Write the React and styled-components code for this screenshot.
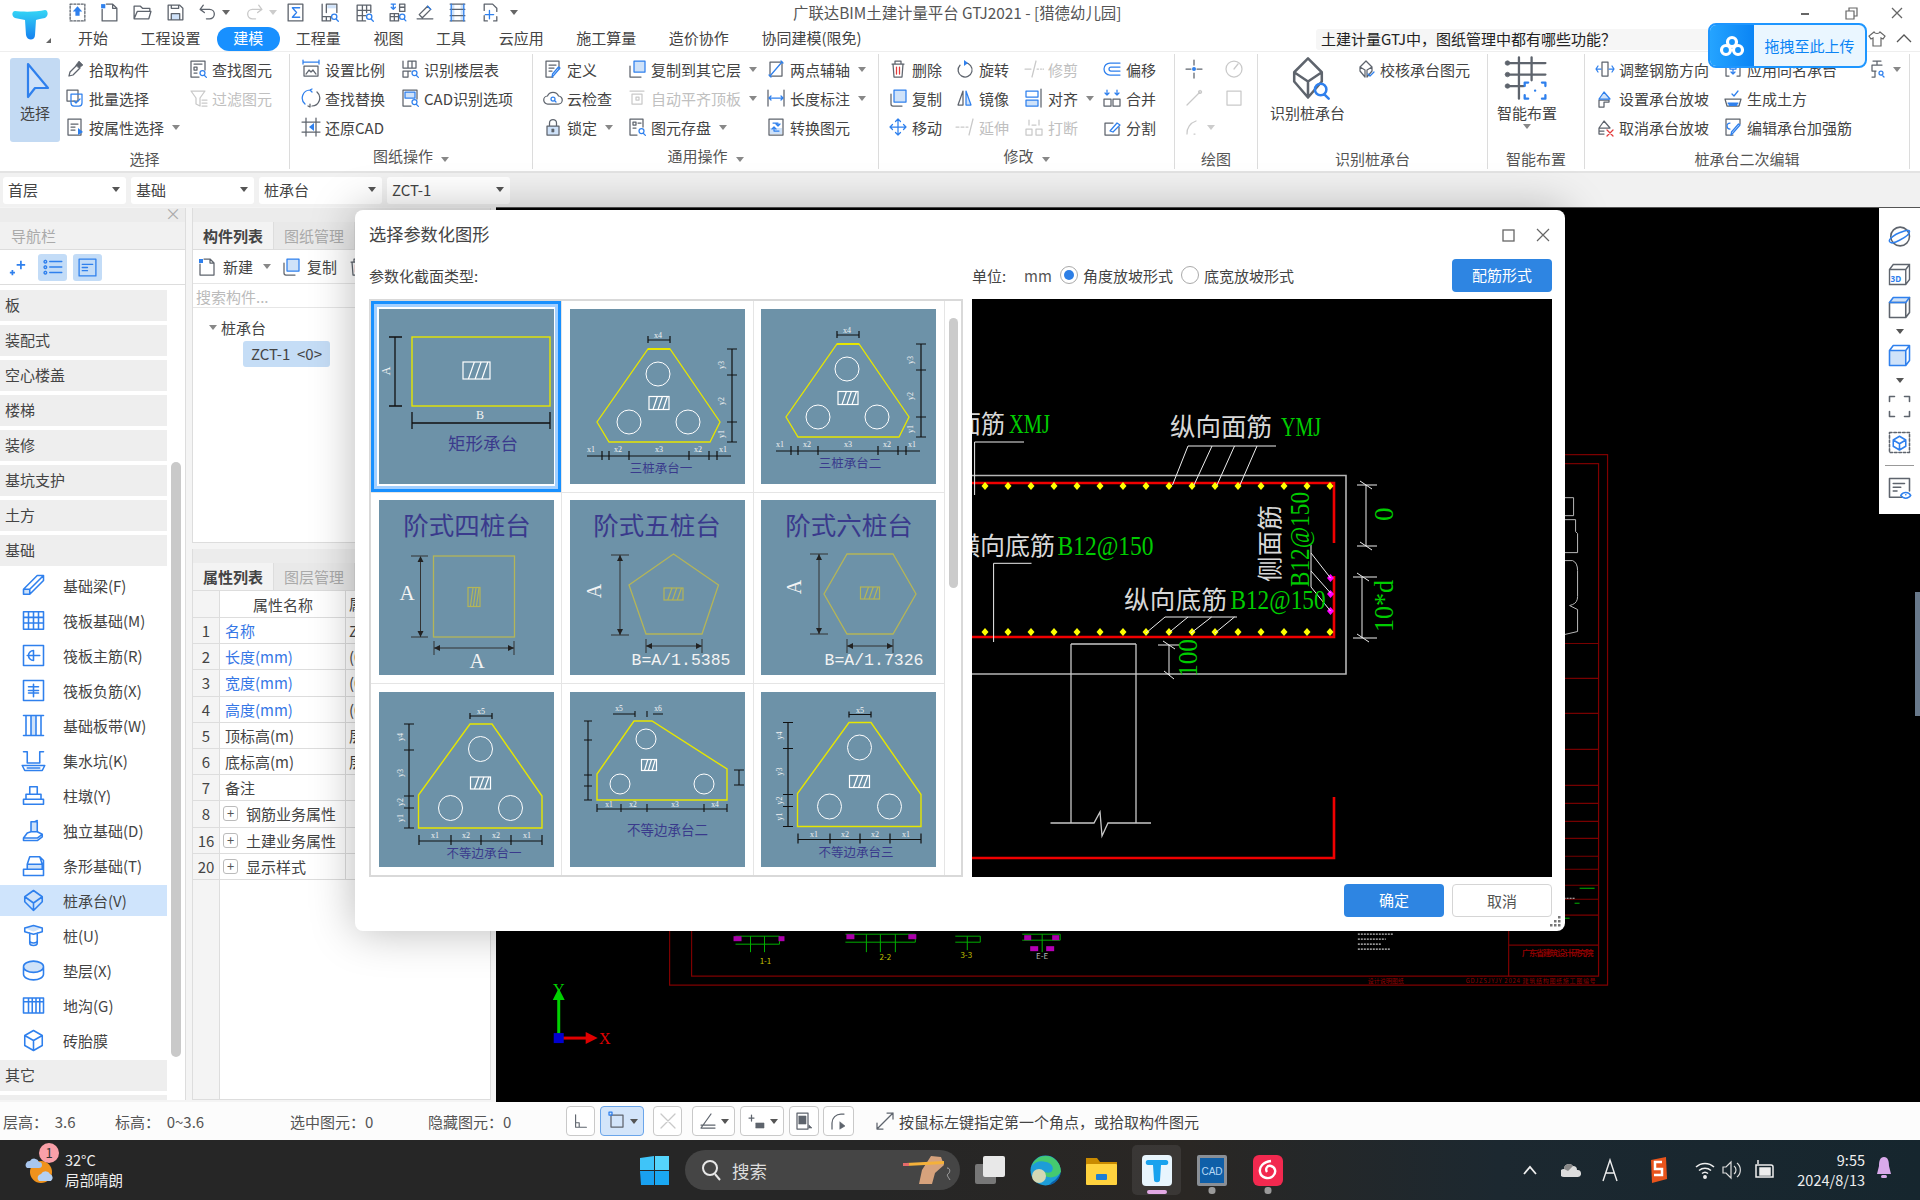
import React from "react";
import styled, { createGlobalStyle } from "styled-components";

const Global = createGlobalStyle`
  html, body {
    margin: 0;
    width: 1920px;
    height: 1200px;
    overflow: hidden;
    background: #fff;
    font-family: "Noto Sans CJK SC", "Noto Sans", sans-serif;
    font-size: 15px;
    color: #444;
  }
  * { box-sizing: border-box; }
`;

const LENS = "M12 14a2.5 2.5 0 1 0 5 0a2.5 2.5 0 1 0-5 0M16 16l2.4 2.4";

const ICONS = {
  upload: { dash: "M3 2h14v16H3z", f: "M10 4l4.5 5H12v4H8V9H5.5z" },
  newfile: { g: "M7 2h6l4 4v12H3V7M13 2v4h4", f: "M2 2h4v4H2z" },
  open: { g: "M2 16V4h6l2 2h7v3M2 16h14l2-7H5z" },
  save: { g: "M3 3h11l3 3v11H3zM6 17v-6h8v6M6 3v3h7V3", l: "M6 11h8v6H6z" },
  undo: { g: "M6 3L3 7l4 3M3 7h9a4.5 4.5 0 0 1 0 9H9" },
  redo: { off: true, g: "M14 3l3 4-4 3M17 7H8a4.5 4.5 0 0 0 0 9h3" },
  sum: { g: "M3 2h14v16H3z", b: "M14 5.5H7l4 4.5-4 4.5h7" },
  q1: { g: "M3 2v16h8M3 14h8v4M7 14v4M7 10V2h10v8", l: "M8 3h8v3H8z", b: LENS },
  q2: { g: "M3 3h13v7M3 8h13M3 13h8M3 3v15h8M8 3v15M12 3v7", b: LENS },
  q3: { g: "M3 11h8v7H3zM7 11v7M3 14h8M12 2h5v7h-5zM12 5h5", b: "M6 2v5M4 5l2 2 2-2M4 2h4M12 14a2.5 2.5 0 1 0 5 0a2.5 2.5 0 1 0-5 0M16 16l2 2" },
  q4: { g: "M2 16h15M6 14l-2-2 8-8 3 3-8 8z", b: "M12 4l3 3" },
  q5: { g: "M3 2h14M3 18h14M3 7h14M3 13h14", b: "M4 2v16M16 2v16", l: "M4 2h3v16H4zM13 2h3v16h-3z" },
  q6: { g: "M4 8V2h8l4 4v3M4 13v5h3M16 14v4h-3", b: "M9 8v8M5 12h8" },
  pick: { g: "M4 17l1-4 7-7 3 3-7 7z", k: "M11 6l3-4 4 4-4 3z" },
  batch: { g: "M2 2h11v11H2z", b: "M6 6h11v9a3 3 0 0 1-3 3H9a3 3 0 0 1-3-3zM9 13l2 2 4-4" },
  propsel: { g: "M3 2h13v16H3zM6 7h7M6 10h4M6 13h4", f: "M13 11l5 4-5 3z" },
  find: { g: "M3 2h14v9M3 2v16h8M6 5h8M6 8h3v3H6zM6 14h3", b: LENS },
  filter: { off: true, g: "M3 3h14l-5 7v8l-4-2v-6zM14 12h5M14 15h5M14 18h5" },
  scale: { g: "M3 7h14v10H3zM5 15l3-4 2 2 2-2 3 4", b: "M2 3h16M2 1v4M18 1v4" },
  floors: { g: "M3 2v7h5V2M8 2h8v7H8M12 2v7M3 12h5v6H3zM8 12h3", b: LENS },
  replace: { g: "M11 18a8 8 0 0 0 5-14M7 18l2 1v-3", b: "M9 2a8 8 0 0 0-5 14M11 1L9 2l2 2" },
  cadopt: { g: "M3 2h14v9M3 2v16h8", l: "M5 4h10v6H5z", b: "M5 4h10v6H5z" + LENS },
  restore: { g: "M5 1v18M15 1v18M1 5h18M1 15h18", f: "M13 6l-5 4 5 4z" },
  define: { g: "M3 2h13v8M3 2v16h7M6 6h7M6 9h5M6 12h3", b: "M17 9l-6 7-2 2 .5-3 6-7z" },
  cloud: { g: "M5 16a4 4 0 0 1-.5-8 6 6 0 0 1 11 0 4 4 0 0 1-.5 8z", b: "M8 11a2 2 0 1 0 4 0a2 2 0 1 0-4 0M12 13l1 1" },
  lock: { g: "M4 9h12v9H4zM6.5 9V6a3.5 3.5 0 0 1 7 0v3", l: "M4 9h12v9H4z", k: "M9 12h2v3H9z" },
  copylayer: { g: "M3 7v11h11", b: "M7 2h11v11H7z", l: "M7 2h11v11H7z" },
  autoalign: { off: true, g: "M3 3h14M5 6h10v10H5zM9 9h3v3H9z" },
  store: { g: "M3 2h13v8M3 2v16h7M6 5h3v3H6zM6 11h3M11 6h3", b: LENS },
  twoaxis: { g: "M4 3h12M4 17h12M4 3v14M16 3v14", b: "M16 3L4 17M3 16l2 2M15 2l2 2" },
  dimlen: { g: "M2 2v16M18 2v16", b: "M3 10h14M5 8l-2 2 2 2M15 8l2 2-2 2" },
  convert: { g: "M3 2h14v16H3z", l: "M4 11h12v6H4z", b: "M7 6h5v3M10 7l2 2 2-2M13 14H8v-3M6 12l2-2 2 2" },
  del: { g: "M4 5h12M7 5V2h6v3M5 5l1 13h8l1-13", r: "M8.5 8v7M11.5 8v7" },
  rotate: { g: "M10 4a7 7 0 1 1-5 2.2", f: "M9 1l4 3-4 3z" },
  trim: { off: true, g: "M12 2L8 18M1 10h6M13 10h1.5M16.5 10h1M19 10h1" },
  offset: { b: "M18 4H8a6 6 0 0 0 0 12h10M18 8H9a2 2 0 0 0 0 4h9" },
  copy: { g: "M3 6v10a2 2 0 0 0 2 2h9", b: "M6 2h12v12H6z", l: "M6 2h12v12H6z" },
  mirror: { g: "M8 3L3 17h5z", b: "M11 3l5 14h-5z", l: "M11 3l5 14h-5z" },
  align: { g: "M17 1v18", b: "M2 3h12v6H2zM2 12h12v6H2z", l: "M2 12h12v6H2z" },
  merge: { g: "M2 11h7v7H2zM11 11h7v7h-7z", b: "M5 2v5M15 2v5M3 5l2 2 2-2M13 5l2 2 2-2" },
  move: { b: "M10 2v16M2 10h16M7.5 4.5L10 2l2.5 2.5M7.5 15.5L10 18l2.5-2.5M4.5 7.5L2 10l2.5 2.5M15.5 7.5L18 10l-2.5 2.5" },
  extend: { off: true, g: "M1 10h3M6 10h3M11 10h2M18 2l-4 16" },
  brk: { off: true, g: "M2 12h6v6H2zM12 12h6v6h-6zM5 3v5M15 3v5M8 8h4" },
  split: { g: "M3 6h8M3 6v12h14v-8", b: "M8 14l7-8 3 2-7 7z" },
  point: { g: "M10 1v5M10 14v5M2 10h5M13 10h5", f: "M8 10a2 2 0 1 0 4 0a2 2 0 1 0-4 0" },
  gauge: { off: true, g: "M2 10a8 8 0 1 0 16 0a8 8 0 1 0-16 0M10 10l4-5" },
  line: { off: true, g: "M3 17L16 4M16 2.5a1.5 1.5 0 1 0 .1 0" },
  square: { off: true, g: "M3 3h14v14H3z" },
  arc: { off: true, g: "M3 17a13 13 0 0 1 9-13M10 17h1" },
  bigfind: { g: "M20 3L32 15v8L20 37 8 23v-8zM8 15l12 8 12-8M20 23v14", b: "M26 30a5 5 0 1 0 10 0a5 5 0 1 0-10 0M34 34l4 4", vb: 40, sw: 2.2 },
  smart: { g: "M13 2v36M24 2v20M3 7h33M3 17h33M3 27h14", k: "M1 7a2 2 0 1 0 4 0a2 2 0 1 0-4 0M1 17a2 2 0 1 0 4 0a2 2 0 1 0-4 0M1 27a2 2 0 1 0 4 0a2 2 0 1 0-4 0", b: "M21 24h-3v3M33 24h3v3M21 38h-3v-3M33 38h3v-3M27 31h.1", vb: 40, sw: 2 },
  check: { g: "M10 2l6 6v4l-5 6V11M10 2L4 8v4l5 6V11L4 8M16 8l-5 3", b: "M12 15l2 2 4-4" },
  adjust: { g: "M7 3h6v14H7z", b: "M1 10h5M14 10h5M3 7l-2 3 2 3M17 7l2 3-2 3" },
  slope: { g: "M4 12h10v2H9v5H4z", b: "M4 11l5-7 6 7z", l: "M4 11l5-7 6 7z" },
  noslope: { g: "M4 11l5-7 6 7zM4 11v6h5M4 14h5", r: "M12 13l6 6M18 13l-6 6" },
  apply: { g: "M3 3v14h3M17 3v14h-3", b: "M7 6h6v4H7zM10 10v5M8 13l2 2 2-2" },
  earth: { g: "M2 11h16l-2 7H4z", b: "M5 15h10M9 6l2 2 4-5", f: "M5 15h10l-1 3H6z" },
  editbar: { g: "M3 2h14v5M3 2v16h7", b: "M17 8l-7 8-2 2 .5-3 7-8zM7 6a3 3 0 0 0 0 6" },
  smartq: { g: "M5 2h8M9 2v4M4 6h10M4 12h4M4 6v6M7 12v6H4", b: "M11 14a2 2 0 1 0 4 0a2 2 0 1 0-4 0M14 16l2 2" },
  sparkle: { f: "M13 2h2v4h4v2h-4v4h-2V8H9V6h4zM3 13h2v2h2v2H5v2H3v-2H1v-2h2z" },
  listA: { b: "M3 4a1.2 1.2 0 1 0 .1 0M3 9a1.2 1.2 0 1 0 .1 0M3 14a1.2 1.2 0 1 0 .1 0M7 5h11M7 10h11M7 15h11" },
  listB: { b: "M2 2h16v16H2zM5 7h10M5 10h5M5 13h5" },
  beam: { b: "M2 17V13L13 2h5v4L7 17zM2 13h5v4M7 13L18 2", l: "M2 13h5v4H2z" },
  raft: { b: "M2 3h16v14H2zM2 7.5h16M2 12h16M6 3v14M10 3v14M14 3v14" },
  mainbar: { b: "M2 2h16v16H2zM5 10h10M10 6v8M10 6a4 4 0 0 0 0 8" },
  negbar: { b: "M2 2h16v16H2zM6 7h8M6 12h8M10 5v10M6 10h8" },
  strip: { b: "M2 2h16M2 18h16M4 2v16M8 2v16M12 2v16M16 2v16", l: "M8 2h4v16H8z" },
  pit: { b: "M2 3h3v9h10V3h3M1 14h18l-2 4H3zM5 16h10" },
  pier: { b: "M7 3h6v6H7zM4 9h12v4H4zM2 13h16v4H2z" },
  isolated: { b: "M8 3h5v8H8zM11 3l2-1M5 12l3-1h5l4 2-4 3H2zM2 16v2h11l4-3v-2", l: "M8 3h5v8H8z" },
  stripf: { b: "M7 3h8l2 6H5zM5 9h12v4H5zM2 13h16v5H2zM15 3l3 3v10", l: "M5 9h12v4H5z" },
  cap: { b: "M10 2l7 5v4l-7 7-7-7V7zM3 7l7 5 7-5M10 12v6", l: "M3 7l7-5 7 5-7 5z" },
  pile: { b: "M3 4l7-2 7 2v3l-7 2-7-2zM7 8v8a3 2 0 0 0 6 0V8M7 14a3 2 0 0 0 6 0", l: "M3 4l7-2 7 2-7 3z" },
  cushion: { b: "M2 7a8 4.5 0 1 0 16 0a8 4.5 0 1 0-16 0M2 7v6a8 4.5 0 0 0 16 0V7", l: "M2 7a8 4.5 0 1 0 16 0a8 4.5 0 1 0-16 0" },
  trench: { b: "M2 4h16v12H2zM2 7h16M6 4v12M9 4v12M12 4v12M15 4v12" },
  brick: { b: "M10 2l7 4v8l-7 4-7-4V6zM3 6l7 4 7-4M10 10v8" },
  sphere: { g: "M3 10a7.5 7.5 0 1 0 15 0a7.5 7.5 0 1 0-15 0", b: "M2 14c-1-2 5-6 8-7s8-3 8-1-4 5-8 7-7 3-8 1z" },
  cubetop: { g: "M2 6h13v12H2zM15 18l3-4V2", b: "M2 6l3-4h13l-3 4z", l: "M2 6l3-4h13l-3 4z" },
  cubefill: { b: "M2 6l3-4h13v12l-3 4H2zM2 6h13v12M15 6l3-4", l: "M2 6h13v12H2z" },
  corners: { g: "M2 6V2h4M14 2h4v4M18 14v4h-4M6 18H2v-4" },
  dashcube: { dash: "M2 2h16v16H2z", b: "M10 5l5 3v5l-5 3-5-3V8zM5 8l5 3 5-3M10 11v5" },
  listeye: { g: "M12 17H2V2h16v10M5 6h9M5 9h6M5 12h3", b: "M11 15.5c2-3 6-3 8 0-2 3-6 3-8 0zM15 15h.1" },
  s1: { g: "M4 3v14h12M4 12h4v5" },
  s2: { g: "M4 4h12v12H4z", b: "M2 1h3v3H2z" },
  s3: { off: true, g: "M3 3l14 14M17 3L3 17M4 4h.1" },
  s4: { g: "M3 17L13 3M3 17h14M3 14h14" },
  s5: { g: "M2 7h5M4.5 4v6", k: "M9 12h8v5H9z" },
  s6: { g: "M3 2h11v16H3z", k: "M5 5h7v8H5zM15 14l3 3h-3z" },
  s7: { g: "M3 18v-6a9 9 0 0 1 9-9M12 3h3", k: "M11 11l5 4-5 3z" },
  expand: { g: "M2 18L18 2M12 2h6v6M2 12v6h6" },
};

const Icon = ({ name, size = 20, off }) => {
  const d = ICONS[name];
  const vb = d.vb || 20;
  const sw = d.sw || (size > 30 ? 1.1 : 1.25);
  const dim = off || d.off;
  const g = dim ? "#c9c9c9" : "#5e646d";
  const b = dim ? "#cccccc" : "#2f80ed";
  return (
    <svg viewBox={`0 0 ${vb} ${vb}`} width={size} height={size} fill="none" strokeWidth={sw} strokeLinejoin="round" strokeLinecap="round">
      {d.l && <path d={d.l} fill={dim ? "#eee" : "#cfe2f9"} />}
      {d.dash && <path d={d.dash} stroke="#5e646d" strokeDasharray="2 1.5" />}
      {d.g && <path d={d.g} stroke={g} />}
      {d.b && <path d={d.b} stroke={b} />}
      {d.r && <path d={d.r} stroke="#e23b3b" />}
      {d.f && <path d={d.f} fill={b} />}
      {d.k && <path d={d.k} fill={g} stroke={g} strokeWidth="0.6" />}
    </svg>
  );
};

/* page frame */
const Page = styled.div`
  position: relative;
  width: 1920px;
  height: 1200px;
  overflow: hidden;
  display: flex;
  flex-direction: column;
  background: #fff;
`;

const Header = styled.div`
  display: flex;
  height: 51px;
`;
const LogoBox = styled.div`
  position: relative;
  width: 60px;
  padding: 5px 0 0 11px;
`;
const LogoTri = styled.span`
  position: absolute;
  left: 46px;
  top: 38px;
  border-right: 5px solid #666;
  border-top: 5px solid transparent;
`;
const HeadRight = styled.div`
  flex: 1;
  display: flex;
  flex-direction: column;
`;
const TitleRow = styled.div`
  display: grid;
  grid-template-columns: 733px auto 1fr;
  height: 27px;
  padding-bottom: 2px;
  align-items: center;
`;
const QuickBar = styled.div`
  display: flex;
  align-items: center;
  padding-left: 7px;
`;
const QuickBtn = styled.div`
  width: ${(p) => p.$w}px;
  display: flex;
  align-items: center;
`;
const Title = styled.div`
  font-size: 15.4px;
  margin-top: -2px;
  color: #555;
  white-space: pre;
`;
const WinCtrls = styled.div`
  display: flex;
  justify-content: flex-end;
  align-items: center;
  padding-right: 16px;
  gap: 32px;
`;
const TabRow = styled.div`
  display: flex;
  align-items: center;
  height: 24px;
  padding-left: 1.7px;
`;
const Tab = styled.div`
  padding: 0 16.3px;
  height: 24px;
  line-height: 21px;
  border-radius: 12px;
  white-space: nowrap;
  color: ${(p) => (p.$on ? "#fff" : "#444")};
  background: ${(p) => (p.$on ? "#1890ff" : "transparent")};
`;
const AskBox = styled.div`
  margin-left: auto;
  width: 394px;
  height: 21px;
  line-height: 19px;
  padding-left: 5px;
  border-radius: 3px;
  background: #f6f6f6;
  color: #222;
  white-space: nowrap;
  font-size: 15px;
  overflow: hidden;
`;
const HeadTools = styled.div`
  width: 210px;
  display: flex;
  justify-content: flex-end;
  align-items: center;
  gap: 10px;
  padding-right: 8px;
`;

/* ribbon */
const Ribbon = styled.div`
  display: flex;
  height: 122px;
  padding-top: 2px;
  border-top: 1px solid #eee;
  border-bottom: 2px solid #e3e3e3;
  background: #fff;
`;
const Group = styled.div`
  width: ${(p) => p.$w}px;
  height: 115px;
  border-right: 1px solid #dcdcdc;
  display: flex;
  flex-direction: column;
`;
const GroupBody = styled.div`
  height: 89px;
  padding: 1px 0 0 ${(p) => p.$pad}px;
  display: flex;
`;
const GroupLabel = styled.div`
  height: 26px;
  padding-top: ${(p) => (p.$drop ? 3 : 6)}px;
  line-height: 20px;
  text-align: center;
  color: #555;
  white-space: nowrap;
`;
const Col = styled.div`
  width: ${(p) => p.$w}px;
  margin-left: ${(p) => p.$ml || 0}px;
  display: flex;
  flex-direction: column;
  flex-shrink: 0;
`;
const ToolRow = styled.div`
  height: 29px;
  padding-bottom: 1px;
  display: flex;
  align-items: center;
  white-space: nowrap;
  color: ${(p) => (p.$off ? "#c0c0c0" : "#444")};
`;
const ToolIcon = styled.span`
  width: 24px;
  height: 20px;
  display: block;
  flex-shrink: 0;
`;
const Caret = styled.span`
  display: inline-block;
  margin-left: ${(p) => p.$ml ?? 8}px;
  border-left: 4px solid transparent;
  border-right: 4px solid transparent;
  border-top: 5px solid ${(p) => p.$c || "#888"};
`;
const SelectBtn = styled.div`
  width: 50px;
  height: 84px;
  margin-top: 3px;
  flex-shrink: 0;
  border-radius: 3px;
  background: #c3daf3;
  display: flex;
  flex-direction: column;
  align-items: center;
  padding-top: 3px;
`;
const BigBtn = styled.div`
  width: ${(p) => p.$w}px;
  flex-shrink: 0;
  display: flex;
  flex-direction: column;
  align-items: center;
  white-space: nowrap;
`;
const BigLabel = styled.div`
  margin-top: ${(p) => p.$mt}px;
  line-height: 22px;
`;

const Tool = ({ icon, label, off, caret }) => (
  <ToolRow $off={off}>
    <ToolIcon><Icon name={icon} off={off} /></ToolIcon>
    {label}
    {caret && <Caret />}
  </ToolRow>
);

/* selectors */
const SelectorBar = styled.div`
  height: 34px;
  display: flex;
  gap: 5px;
  padding: 4px 0 0 3px;
  background: #f1f1f1;
`;
const Selector = styled.div`
  width: 123px;
  height: 27px;
  padding: 0 6px 2px 5px;
  background: #fff;
  border-radius: 3px;
  display: flex;
  justify-content: space-between;
  align-items: center;
`;

/* work area */
const Main = styled.div`
  height: 895px;
  display: flex;
  background: #f4f4f4;
`;
const Nav = styled.div`
  position: relative;
  width: 186px;
  margin: 1px 0 2px;
  border-right: 1px solid #ddd;
  background: #fff;
  overflow: hidden;
  flex-shrink: 0;
`;
const Band = styled.div`
  position: relative;
  height: 14px;
  background: #ececec;
`;
const BandClose = styled.span`
  position: absolute;
  right: 4px;
  top: -5px;
  font-size: 16px;
  line-height: 20px;
  color: #aaa;
`;
const NavTitle = styled.div`
  height: 28px;
  line-height: 27px;
  padding-left: 11px;
  color: #aaa;
  background: #f1f1f1;
  border-bottom: 1px solid #ddd;
`;
const NavTools = styled.div`
  height: 35px;
  display: flex;
  align-items: center;
  padding-left: 9px;
  border-bottom: 1px solid #ddd;
`;
const NavToggle = styled.div`
  width: 29px;
  height: 27px;
  border-radius: 3px;
  background: #c3dcf7;
  display: flex;
  align-items: center;
  justify-content: center;
  margin-left: ${(p) => p.$ml}px;
`;
const NavList = styled.div`
  display: flex;
  flex-direction: column;
  gap: 4px;
  padding-top: 5px;
  width: 167px;
`;
const NavGroup = styled.div`
  height: 31px;
  line-height: 30px;
  padding-left: 5px;
  background: #eeeeee;
  flex-shrink: 0;
`;
const NavItem = styled.div`
  height: 31px;
  display: flex;
  align-items: center;
  padding: 0 0 1px 21px;
  gap: 17px;
  flex-shrink: 0;
  white-space: nowrap;
  background: ${(p) => (p.$on ? "#cfe4fc" : "transparent")};
`;
const NavScroll = styled.div`
  position: absolute;
  left: 171px;
  top: 254px;
  width: 10px;
  height: 595px;
  border-radius: 5px;
  background: #c9c9c9;
`;

const ListCol = styled.div`
  width: 299px;
  margin: 1px 5px 2px 6px;
  display: flex;
  flex-direction: column;
  gap: 6px;
  flex-shrink: 0;
`;
const Panel = styled.div`
  height: ${(p) => p.$h}px;
  flex: ${(p) => (p.$h ? "none" : 1)};
  background: #fff;
  border: 1px solid #ddd;
  border-top: 0;
  display: flex;
  flex-direction: column;
  overflow: hidden;
`;
const TabStrip = styled.div`
  display: flex;
  height: 28px;
  background: #e9e9e9;
  border-bottom: 1px solid #ddd;
`;
const PTab = styled.div`
  width: 81px;
  line-height: 27px;
  text-align: center;
  font-weight: ${(p) => (p.$on ? 700 : 400)};
  color: ${(p) => (p.$on ? "#444" : "#aaa")};
  background: ${(p) => (p.$on ? "#f3f3f3" : "#e9e9e9")};
  border-right: 1px solid #ddd;
`;
const PanelBar = styled.div`
  height: 34px;
  display: flex;
  align-items: center;
  padding-left: 4px;
  border-bottom: 1px solid #e6e6e6;
`;
const BarItem = styled.div`
  display: flex;
  align-items: center;
  gap: 6px;
  margin-right: 10px;
`;
const SearchLine = styled.div`
  height: 24px;
  line-height: 23px;
  padding: 1px 0 0 3px;
  color: #bbb;
  border-bottom: 1px solid #e6e6e6;
`;
const TreeRow = styled.div`
  margin: 7px 0 0 16px;
  display: flex;
  align-items: center;
  height: 24px;
  gap: 4px;
`;
const TreePill = styled.div`
  margin: 2px 0 0 50px;
  width: 87px;
  height: 26px;
  line-height: 25px;
  border-radius: 3px;
  text-align: center;
  background: #c5ddf6;
  white-space: pre;
`;
const Table = styled.div`
  flex: 1;
  display: flex;
  flex-direction: column;
`;
const TRow = styled.div`
  display: grid;
  grid-template-columns: 27px 126px 1fr;
  height: ${(p) => p.$h || 26.2}px;
  flex: ${(p) => (p.$fill ? 1 : "none")};
`;
const TIndex = styled.div`
  background: #f4f4f4;
  border-right: 1px solid #ddd;
  border-bottom: ${(p) => (p.$fill ? 0 : "1px solid #ddd")};
  text-align: center;
  line-height: 25px;
`;
const TName = styled.div`
  display: flex;
  align-items: center;
  padding-left: ${(p) => (p.$head ? 33 : 5)}px;
  border-right: 1px solid #ddd;
  border-bottom: 1px solid #ddd;
  white-space: nowrap;
  color: ${(p) => (p.$blue ? "#3677e6" : "#444")};
`;
const TValue = styled.div`
  padding-left: 3px;
  line-height: 25px;
  border-bottom: 1px solid #ddd;
  white-space: nowrap;
  overflow: hidden;
`;
const PlusBox = styled.span`
  width: 15px;
  height: 15px;
  border: 1px solid #bbb;
  border-radius: 3px;
  font-size: 13px;
  line-height: 12px;
  text-align: center;
  margin-right: 8px;
  margin-left: -2px;
  color: #555;
`;

const CanvasBox = styled.div`
  position: relative;
  flex: 1;
  background: #000;
  border-top: 1px solid #555;
  overflow: hidden;
`;
const Art = styled.svg`
  display: block;
  width: 100%;
  height: 100%;
`;
const Palette = styled.div`
  position: absolute;
  right: 0;
  top: 0;
  width: 41px;
  height: 306px;
  background: #fff;
  display: flex;
  flex-direction: column;
  align-items: center;
  padding-top: 16px;
`;
const PaletteSlot = styled.div`
  height: 25px;
  margin-bottom: ${(p) => p.$mb || 0}px;
`;
const PaletteCaret = styled.div`
  height: ${(p) => p.$h || 24}px;
  margin-top: -1px;
  display: flex;
  align-items: center;
  justify-content: center;
`;
const PaletteRule = styled.div`
  width: 29px;
  height: 1px;
  background: #999;
  margin: 10px 0;
`;
const EdgeBar = styled.div`
  position: absolute;
  right: 0;
  top: 384px;
  width: 5px;
  height: 124px;
  background: #68788a;
`;

/* status + taskbar */
const StatusBar = styled.div`
  height: 38px;
  display: flex;
  align-items: center;
  padding-left: 3px;
  background: #fcfcfc;
`;
const StatText = styled.div`
  width: ${(p) => p.$w}px;
  white-space: pre;
  color: #555;
`;
const StatBtn = styled.div`
  width: ${(p) => p.$w}px;
  height: 30px;
  margin-left: ${(p) => p.$ml || 0}px;
  border: 1.5px solid ${(p) => (p.$on ? "#6aa5ea" : "#c9c9c9")};
  border-radius: 4px;
  background: ${(p) => (p.$on ? "#d3e5fa" : "#fff")};
  display: flex;
  align-items: center;
  justify-content: center;
  gap: 3px;
`;
const Hint = styled.div`
  margin-left: 21px;
  display: flex;
  align-items: center;
  gap: 4px;
  color: #444;
  white-space: nowrap;
`;

const Taskbar = styled.div`
  height: 60px;
  display: flex;
  align-items: center;
  color: #eee;
  background: linear-gradient(90deg, #262626 0%, #262626 45%, #2a2724 62%, #1c2830 78%, #16262e 100%);
`;
const Weather = styled.div`
  position: relative;
  width: 640px;
  padding-left: 25px;
  display: flex;
  align-items: center;
  gap: 9px;
`;
const WeatherBadge = styled.span`
  position: absolute;
  left: 39px;
  top: -7px;
  width: 20px;
  height: 20px;
  border-radius: 50%;
  background: #f9a0a8;
  color: #333;
  font-size: 13px;
  line-height: 20px;
  text-align: center;
`;
const WeatherText = styled.div`
  line-height: 20px;
  font-size: 14.5px;
`;
const SearchPill = styled.div`
  position: relative;
  width: 275px;
  height: 40px;
  margin-left: 16px;
  border-radius: 20px;
  background: #454545;
  display: flex;
  align-items: center;
  padding-left: 14px;
  gap: 9px;
  font-size: 17.5px;
  color: #ddd;
`;
const Doodle = styled.svg`
  position: absolute;
  right: 5px;
  top: 4px;
`;
const TaskBtn = styled.div`
  position: relative;
  width: 49px;
  height: 50px;
  margin-left: ${(p) => p.$ml ?? 6.5}px;
  border-radius: 5px;
  background: ${(p) => (p.$on ? "rgba(255,255,255,.08)" : "transparent")};
  display: flex;
  align-items: center;
  justify-content: center;
`;
const TaskMark = styled.span`
  position: absolute;
  bottom: 1px;
  left: 50%;
  transform: translateX(-50%);
  width: ${(p) => (p.$on ? 20 : 7)}px;
  height: ${(p) => (p.$on ? 4 : 7)}px;
  border-radius: 3px;
  background: ${(p) => (p.$on ? "#e2a9e4" : "#9a9a9a")};
`;
const Tray = styled.div`
  margin-left: auto;
  display: flex;
  align-items: center;
  padding-right: 28px;
`;
const TrayItem = styled.div`
  width: 20px;
  margin-left: ${(p) => p.$ml}px;
  display: flex;
  justify-content: center;
`;
const Clock = styled.div`
  margin-left: 22px;
  text-align: right;
  line-height: 20px;
  font-size: 14.5px;
  color: #eee;
`;
const Bell = styled.div`
  margin-left: 11px;
  width: 16px;
`;

/* floating upload */
const Upload = styled.div`
  position: absolute;
  left: 1708px;
  top: 23px;
  width: 159px;
  height: 45px;
  border-radius: 8px;
  border: 2px solid #1e96ff;
  background: #eaf6ff;
  display: flex;
  overflow: hidden;
  z-index: 3;
`;
const UploadIcon = styled.div`
  width: 44px;
  background: linear-gradient(90deg, #25a4ff, #0a84f5);
  display: flex;
  align-items: center;
  justify-content: center;
`;
const UploadText = styled.div`
  flex: 1;
  text-align: center;
  line-height: 41px;
  color: #0a84f5;
  white-space: nowrap;
`;

/* dialog */
const Dialog = styled.div`
  position: absolute;
  left: 355px;
  top: 210px;
  width: 1210px;
  height: 721px;
  background: #fff;
  border-radius: 8px;
  box-shadow: 0 0 45px rgba(0, 0, 0, 0.28);
  padding: 0 13px 0 14px;
  display: flex;
  flex-direction: column;
  z-index: 2;
`;
const DlgHead = styled.div`
  height: 49px;
  display: flex;
  align-items: center;
  justify-content: space-between;
  padding-bottom: 3px;
`;
const DlgTitle = styled.div`
  font-size: 17.2px;
  color: #444;
`;
const DlgCtrls = styled.div`
  display: flex;
  align-items: center;
  gap: 21px;
  margin: 4px 2px 0 0;
`;
const DlgOptions = styled.div`
  height: 40px;
  padding-bottom: 8px;
  display: flex;
  align-items: center;
`;
const OptLabel = styled.div`
  width: 603px;
  white-space: nowrap;
`;
const OptUnit = styled.div`
  width: 52px;
  white-space: nowrap;
`;
const OptMM = styled.div`
  width: 36px;
  color: #555;
`;
const Radio = styled.span`
  width: 18px;
  height: 18px;
  border-radius: 50%;
  border: 1.5px solid #aaa;
  background: #fff;
  margin-right: 5px;
  flex-shrink: 0;
  display: flex;
  align-items: center;
  justify-content: center;
`;
const RadioDot = styled.span`
  width: 10px;
  height: 10px;
  border-radius: 50%;
  background: #2d7fe6;
`;
const RadioLabel = styled.div`
  width: ${(p) => p.$w}px;
  white-space: nowrap;
`;
const BlueBtn = styled.div`
  margin-left: auto;
  width: 100px;
  height: 33px;
  line-height: 32px;
  border-radius: 4px;
  background: #2e85e2;
  color: #fff;
  text-align: center;
`;
const GhostBtn = styled.div`
  width: 100px;
  height: 33px;
  line-height: 31px;
  border-radius: 4px;
  border: 1px solid #d5d5d5;
  color: #555;
  text-align: center;
`;
const DlgBody = styled.div`
  display: flex;
  gap: 9px;
  height: 578px;
`;
const GridBox = styled.div`
  position: relative;
  width: 594px;
  height: 578px;
  border: 2px solid #d9d9d9;
  overflow: hidden;
`;
const ShapeGrid = styled.div`
  display: grid;
  grid-template-columns: repeat(3, 191.4px);
  grid-auto-rows: 191.5px;
`;
const Cell = styled.div`
  display: flex;
  align-items: center;
  justify-content: center;
  border-right: 1.5px solid #e5e5e5;
  border-bottom: 1.5px solid #e5e5e5;
  box-shadow: ${(p) => (p.$on ? "inset 0 0 0 3px #1890ff, inset 0 0 0 6px #a2cfff" : "none")};
`;
const ShapeBox = styled.div`
  width: 175px;
  height: 175px;
  background: #6d92a8;
`;
const ShapeSvg = styled.svg`
  display: block;
`;
const GridScroll = styled.div`
  position: absolute;
  left: 578px;
  top: 17px;
  width: 9px;
  height: 270px;
  border-radius: 5px;
  background: #cbcbcb;
`;
const Preview = styled.svg`
  display: block;
  width: 580px;
  height: 578px;
  background: #000;
`;
const DlgFoot = styled.div`
  display: flex;
  justify-content: flex-end;
  gap: 8px;
  padding-top: 7px;
`;
const FootBlue = styled(BlueBtn)`
  margin-left: 0;
`;
const Grip = styled.svg`
  position: absolute;
  right: 3px;
  bottom: 3px;
`;

/* svg label helpers */
const CadText = styled.text`
  font-family: "Noto Sans CJK SC", sans-serif;
  fill: #d8d8d8;
`;
const CadCode = styled.text`
  font-family: "Liberation Serif", serif;
  fill: #00cc00;
`;
const ShapeTitle = styled.text`
  font-family: "Noto Sans CJK SC", sans-serif;
  fill: #3a3a8c;
  text-anchor: middle;
`;
const DimText = styled.text`
  font-family: "Liberation Serif", serif;
  fill: #f3f3f3;
  text-anchor: middle;
`;
const DimMono = styled(DimText)`
  font-family: "Liberation Mono", monospace;
`;

const Hatch = ({ x, y, w, h, c = "#fff" }) => (
  <g stroke={c} fill="none" strokeWidth="1.2">
    <rect x={x - w / 2} y={y - h / 2} width={w} height={h} />
    {[0.2, 0.45, 0.7].map((t) => (
      <path key={t} d={`M${x - w / 2 + t * w} ${y + h / 2}l${w * 0.22} ${-h}`} />
    ))}
  </g>
);

const Y = "#e6e600";
const TriPile = () => (
  <g>
    <path d="M78 40h22l50 73-10 20H39l-12-20z" fill="none" stroke={Y} strokeWidth="1.3" />
    <path d="M78 40h22" stroke={Y} strokeWidth="2" />
    {[[88, 65], [59, 113], [118, 113]].map(([cx, cy]) => (
      <circle key={cx} cx={cx} cy={cy} r="12" fill="none" stroke="#fff" />
    ))}
    <Hatch x={89} y={94} w={20} h={13} />
    <path d="M162 40v93M157 40h10M157 66h10M157 113h10M157 133h10M78 31h22M78 27v7M100 27v7M17 147h144M32 142v9M39 142v9M59 142v9M119 142v9M139 142v9M147 142v9" stroke="#111" strokeWidth="1.2" fill="none" />
    {[[21, 143, "x1"], [48, 143, "x2"], [89, 143, "x3"], [128, 143, "x2"], [153, 143, "x1"], [88, 29, "x4"]].map(([x, y, t], i) => (
      <DimText key={i} x={x} y={y} fontSize="8">{t}</DimText>
    ))}
    {[[56, "y3"], [92, "y2"], [125, "y1"]].map(([y, t]) => (
      <DimText key={t} x={154} y={y} fontSize="8" transform={`rotate(-90 154 ${y})`}>{t}</DimText>
    ))}
  </g>
);

const UnequalOne = () => (
  <g>
    <path d="M91 32h22l50 72v32H39.5V103z" fill="none" stroke={Y} strokeWidth="1.4" />
    {[[101.5, 57], [71.5, 116], [131.5, 116]].map(([cx, cy]) => (
      <ellipse key={cx} cx={cx} cy={cy} rx="12" ry="12.5" fill="none" stroke="#fff" />
    ))}
    <Hatch x={101.5} y={91} w={20} h={12} />
    <path d="M30 32v104M25 32h10M25 58h10M25 104h10M25 116h10M25 136h10M91 24h22M91 21v6M113 21v6M40 149h123M40 143v10M72 143v10M102 143v10M132 143v10M163 143v10" stroke="#111" strokeWidth="1.2" fill="none" />
    {[[56, 146, "x1"], [87, 146, "x2"], [117, 146, "x2"], [148, 146, "x1"], [102, 22, "x5"]].map(([x, y, t], i) => (
      <DimText key={i} x={x} y={y} fontSize="8">{t}</DimText>
    ))}
    {[[45, "y4"], [81, "y3"], [110, "y2"], [126, "y1"]].map(([y, t]) => (
      <DimText key={t} x={24} y={y} fontSize="8" transform={`rotate(-90 24 ${y})`}>{t}</DimText>
    ))}
  </g>
);

const shapes = [
  (
    <g key="rect">
      <rect x="33" y="28" width="138" height="69" fill="none" stroke={Y} strokeWidth="1.4" />
      <path d="M16 28v69M10 28h13M10 97h13M33 114h138M33 103v17M171 103v17" stroke="#111" strokeWidth="1.3" fill="none" />
      <Hatch x={97.5} y={61.5} w={27} h={17} />
      <DimText x={11} y={62} fontSize="12" transform="rotate(-90 11 62)">A</DimText>
      <DimText x={101} y={110} fontSize="12">B</DimText>
      <ShapeTitle x={104} y={141} fontSize="17.5">矩形承台</ShapeTitle>
    </g>
  ),
  (
    <g key="t1">
      <TriPile />
      <ShapeTitle x={91} y={164} fontSize="12.5">三桩承台一</ShapeTitle>
    </g>
  ),
  (
    <g key="t2">
      <g transform="translate(-2,-5)"><TriPile /></g>
      <ShapeTitle x={89} y={159} fontSize="12.5">三桩承台二</ShapeTitle>
    </g>
  ),
  (
    <g key="s4">
      <ShapeTitle x={88} y={35} fontSize="25.5">阶式四桩台</ShapeTitle>
      <rect x="54.5" y="56" width="81" height="81" fill="none" stroke="#b4b558" strokeWidth="1.3" />
      <Hatch x={95} y={97} w={12} h={19} c="#b4b558" />
      <path d="M41.5 57v80M32 56h17M32 137h17M55 148h80M55 141v14M135 141v14" stroke="#333" fill="none" />
      <path d="M41.5 56l-3 6h6zM41.5 137l-3-6h6zM55 148l6-3v6zM135 148l-6-3v6z" fill="#222" />
      <DimText x={28} y={100} fontSize="21">A</DimText>
      <DimText x={98} y={168} fontSize="21">A</DimText>
    </g>
  ),
  (
    <g key="s5">
      <ShapeTitle x={87} y={35} fontSize="25.5">阶式五桩台</ShapeTitle>
      <path d="M103.5 54l45 31-16.5 49H76L59 85z" fill="none" stroke="#b4b558" strokeWidth="1.3" />
      <Hatch x={103.5} y={94} w={19} h={12} c="#b4b558" />
      <path d="M50 55v80M41 55h18M41 135h18M76 146h56M76 139v14M132 139v14" stroke="#333" fill="none" />
      <path d="M50 55l-3 6h6zM50 135l-3-6h6zM76 146l6-3v6zM132 146l-6-3v6z" fill="#222" />
      <DimText x={31} y={91} fontSize="20" transform="rotate(-90 31 91)">A</DimText>
      <DimMono x={111} y={165} fontSize="16.5">B=A/1.5385</DimMono>
    </g>
  ),
  (
    <g key="s6">
      <ShapeTitle x={88} y={35} fontSize="25.5">阶式六桩台</ShapeTitle>
      <path d="M86 54h46l23 40-23 40H86L63 94z" fill="none" stroke="#b4b558" strokeWidth="1.3" />
      <Hatch x={109} y={93} w={19} h={12} c="#b4b558" />
      <path d="M58 54v80M49 54h18M49 134h18M86 146h46M86 139v14M132 139v14" stroke="#333" fill="none" />
      <path d="M58 54l-3 6h6zM58 134l-3-6h6zM86 146l6-3v6zM132 146l-6-3v6z" fill="#222" />
      <DimText x={39.5} y={87} fontSize="20" transform="rotate(-90 39.5 87)">A</DimText>
      <DimMono x={113} y={165} fontSize="16.5">B=A/1.7326</DimMono>
    </g>
  ),
  (
    <g key="u1">
      <UnequalOne />
      <ShapeTitle x={105} y={166} fontSize="12.5">不等边承台一</ShapeTitle>
    </g>
  ),
  (
    <g key="u2">
      <path d="M64 29h18l75 48v31H27V82z" fill="none" stroke={Y} strokeWidth="1.4" />
      {[[76, 47], [50, 92], [134, 92]].map(([cx, cy]) => (
        <circle key={cx} cx={cx} cy={cy} r="10" fill="none" stroke="#fff" />
      ))}
      <Hatch x={79} y={73} w={15} h={11} />
      <path d="M18 29v79M14 29h8M14 48h8M14 83h8M14 94h8M14 108h8M43 22h22M65 19v6M77 19v6M83 22h10M27 117h130M27 112v8M51 112v8M77 112v8M134 112v8M157 112v8M169 78v15M164 78h10M164 93h10" stroke="#111" strokeWidth="1.1" fill="none" />
      {[[39, 115, "x1"], [63, 115, "x2"], [105, 115, "x3"], [145, 115, "x4"], [49, 19, "x5"], [88, 19, "x6"]].map(([x, y, t], i) => (
        <DimText key={i} x={x} y={y} fontSize="7.5">{t}</DimText>
      ))}
      <ShapeTitle x={97.5} y={143} fontSize="13.5">不等边承台二</ShapeTitle>
    </g>
  ),
  (
    <g key="u3">
      <g transform="translate(-3,-1.5)"><UnequalOne /></g>
      <ShapeTitle x={95} y={165} fontSize="12.5">不等边承台三</ShapeTitle>
    </g>
  ),
];

const dotXs = Array.from({ length: 16 }, (_, i) => 13 + i * 23);

const Drawing = () => (
  <>
    <path d="M-4 176.5H374V375H-4" stroke="#b5b5b5" strokeWidth="1.6" fill="none" />
    <path d="M99 345h65M99 345v179M164 345v179M78.5 524H122l6-11 2 24 6-13h43" stroke="#c8c8c8" strokeWidth="1.3" fill="none" />
    <path d="M-4 184H362V244M-4 338H362V277M-4 559H362V498" stroke="#f00000" strokeWidth="2.6" fill="none" />
    {dotXs.map((x) => (
      <g key={x} fill="#ffff00">
        <path d={`M${x} 183l3.5 4-3.5 4-3.5-4z`} />
        <path d={`M${x} 329l3.5 4-3.5 4-3.5-4z`} />
      </g>
    ))}
    {[279, 295, 312].map((y) => (
      <path key={y} d={`M358.5 ${y - 4}l3.5 4-3.5 4-3.5-4z`} fill="#ff00ff" />
    ))}
    <path
      d="M52 143H2.600V196M216 147H304M216 147L200.500 186M240 147L222 186M262.500 147L245 186M285 147L268 186M59.500 264.300H21.600V343M193 318H265M193 318L174 334M216 318L196.500 334M239.600 318L219 334M262.500 318L243 334M339 246V288M339 254L358.500 279M339 272L358.500 294M339 288L358.500 312M394 186V247M385 186H405M385 247H405M390 278V339M381 278H405M381 339H405M197 346V376M186 346H207M388 182l12 8M388 243l12 8M385 274l12 8M385 335l12 8M191 342l12 8M192 372l10 8"
      stroke="#eee"
      strokeWidth="1"
      fill="none"
    />
    <CadText x={-15} y={134} fontSize="24.5" textLength="48" lengthAdjust="spacingAndGlyphs">面筋</CadText>
    <CadCode x={37} y={134} fontSize="27" textLength="41" lengthAdjust="spacingAndGlyphs">XMJ</CadCode>
    <CadText x={198} y={137} fontSize="25.5" textLength="102">纵向面筋</CadText>
    <CadCode x={309} y={137} fontSize="27" textLength="40" lengthAdjust="spacingAndGlyphs">YMJ</CadCode>
    <CadText x={-17} y={256} fontSize="25" textLength="100">横向底筋</CadText>
    <CadCode x={85.5} y={256} fontSize="27" textLength="96" lengthAdjust="spacingAndGlyphs">B12@150</CadCode>
    <CadText x={152} y={310} fontSize="25.5" textLength="103">纵向底筋</CadText>
    <CadCode x={258.5} y={310} fontSize="27" textLength="95" lengthAdjust="spacingAndGlyphs">B12@150</CadCode>
    <CadText x={0} y={0} fontSize="25.5" textLength="77" transform="translate(307 283) rotate(-90)">侧面筋</CadText>
    <CadCode x={0} y={0} fontSize="27" textLength="95" lengthAdjust="spacingAndGlyphs" transform="translate(337 288) rotate(-90)">B12@150</CadCode>
    <CadCode x={0} y={0} fontSize="27" transform="translate(421 222) rotate(-90)">0</CadCode>
    <CadCode x={0} y={0} fontSize="27" textLength="52" lengthAdjust="spacingAndGlyphs" transform="translate(421 333) rotate(-90)">10*d</CadCode>
    <CadCode x={0} y={0} fontSize="27" textLength="38" lengthAdjust="spacingAndGlyphs" transform="translate(225 378) rotate(-90)">100</CadCode>
  </>
);

const CanvasArt = () => (
  <Art viewBox="496 207 1424 895">
    <g stroke="#800000" fill="none" strokeWidth="1.2">
      <path d="M669 454H1608V985H669zM691 463H1599V976H691z" />
      <path d="M1565 643H1599M1565 678H1599M1565 713H1599M1565 749H1599M1565 785H1599M1565 803H1599M1565 821H1599M1565 838H1599M1565 856H1599M1565 869H1599M1565 885H1599M1565 899H1599M1565 915H1599M1509 930V976M1509 945H1599" />
    </g>
    <path d="M1565 497h9v18h-9M1565 519h11v12l2 2v19h-13M1565 560h8q5 2 5 10v26q0 6-5 8l-3 1 8 4v22l-13 3" stroke="#ccc" fill="none" />
    <g fill="none" stroke="#00c000">
      <path d="M1580 888h15M1575 903h5M1565 918h5M735 936h44v8H735M750 936v16M764 936v16M845 934h70v8h-70M866 934v18M880 934v18M895 934v18M955 936h25v6h-25M967 936v14M1022 934h38v6h-38M1042 934v18" />
    </g>
    <g fill="#c000c0">
      <rect x="733" y="936" width="8" height="5" />
      <rect x="778" y="936" width="6" height="5" />
      <rect x="846" y="934" width="8" height="5" />
      <rect x="908" y="934" width="8" height="5" />
      <rect x="1024" y="935" width="7" height="5" />
      <rect x="1052" y="935" width="7" height="5" />
      <rect x="1030" y="946" width="8" height="5" />
      <rect x="1046" y="946" width="8" height="5" />
    </g>
    <g fontFamily="Noto Sans CJK SC" fontSize="8">
      <text x="765" y="964" fill="#c8c800" textAnchor="middle">1-1</text>
      <text x="885" y="960" fill="#c8c800" textAnchor="middle">2-2</text>
      <text x="966" y="958" fill="#c8c800" textAnchor="middle">3-3</text>
      <text x="1042" y="959" fill="#bbb" textAnchor="middle">E-E</text>
      <text x="1522" y="956" fill="#8f0000" fontSize="8.5" fontWeight="700" textLength="72">广东省建筑设计研究院</text>
      <text x="1368" y="983" fill="#8f0000" fontSize="6">设计说明图纸</text>
      <text x="1466" y="983" fill="#8f0000" fontSize="6" textLength="130">GDJZSJYJY 2024 建筑结构图纸施工图编号</text>
    </g>
    <path d="M1358 934h36M1358 939h28M1358 944h24M1358 949h33M1520 903h28M1555 898h20" stroke="#ddd" strokeWidth="1.2" strokeDasharray="2 1" />
    <g>
      <path d="M558 1038V997" stroke="#00d000" strokeWidth="3" />
      <path d="M552 1000l6-12 6 12z" fill="#00d000" />
      <path d="M558 1038H587" stroke="#e00000" strokeWidth="3" />
      <path d="M585 1032l12 6-12 6z" fill="#e00000" />
      <rect x="553" y="1033" width="10" height="10" fill="#0000d0" />
      <text x="558" y="999" dy="-4" fill="#00d000" fontSize="16" textAnchor="middle" fontFamily="Liberation Serif">Y</text>
      <text x="604" y="1044" fill="#e00000" fontSize="16" textAnchor="middle" fontFamily="Liberation Serif">X</text>
    </g>
  </Art>
);

const quick = [
  { i: "upload", w: 32 }, { i: "newfile", w: 33 }, { i: "open", w: 33 }, { i: "save", w: 32 },
  { i: "undo", w: 47, c: "#666" }, { i: "redo", w: 41, c: "#ccc" }, { i: "sum", w: 34 }, { i: "q1", w: 35 },
  { i: "q2", w: 33 }, { i: "q3", w: 28 }, { i: "q4", w: 32 }, { i: "q5", w: 33 }, { i: "q6", w: 30 },
];

const tabs = ["开始", "工程设置", "建模", "工程量", "视图", "工具", "云应用", "施工算量", "造价协作", "协同建模(限免)"];
const navGroups = ["板", "装配式", "空心楼盖", "楼梯", "装修", "基坑支护", "土方", "基础"];
const navItems = [
  ["beam", "基础梁(F)"], ["raft", "筏板基础(M)"], ["mainbar", "筏板主筋(R)"], ["negbar", "筏板负筋(X)"],
  ["strip", "基础板带(W)"], ["pit", "集水坑(K)"], ["pier", "柱墩(Y)"], ["isolated", "独立基础(D)"],
  ["stripf", "条形基础(T)"], ["cap", "桩承台(V)"], ["pile", "桩(U)"], ["cushion", "垫层(X)"],
  ["trench", "地沟(G)"], ["brick", "砖胎膜"],
];
const tableRows = [
  ["1", "名称", "ZCT-1", true], ["2", "长度(mm)", "(0)", true], ["3", "宽度(mm)", "(0)", true], ["4", "高度(mm)", "(0)", true],
  ["5", "顶标高(m)", "层底标高", false], ["6", "底标高(m)", "层底标高", false], ["7", "备注", "", false],
  ["8", "钢筋业务属性", "", false, true], ["16", "土建业务属性", "", false, true], ["20", "显示样式", "", false, true],
];

const Column = ({ w, ml, tools }) => (
  <Col $w={w} $ml={ml}>
    {tools.map(([icon, label, opt]) => (
      <Tool key={icon + label} icon={icon} label={label} off={opt === "off" || opt === "offc"} caret={opt === "c" || opt === "offc"} />
    ))}
  </Col>
);

export default function App() {
  return (
    <Page>
      <Global />
      <Header>
        <LogoBox>
          <svg width="38" height="35" viewBox="0 0 38 35">
            <defs>
              <linearGradient id="tlogo" x1="0" y1="0" x2="0" y2="1">
                <stop offset="0" stopColor="#35d6f5" />
                <stop offset="1" stopColor="#1580f0" />
              </linearGradient>
            </defs>
            <path d="M4 6C12 7 26 7 34 5c3 0 4 6 0 8-4 1-7 1-9 2l-1 15c0 6-8 6-9 0l-1-15c-3-1-7-1-10-2-4-2-3-7 0-7z" fill="url(#tlogo)" />
          </svg>
          <LogoTri />
        </LogoBox>
        <HeadRight>
          <TitleRow>
            <QuickBar>
              {quick.map((q) => (
                <QuickBtn key={q.i} $w={q.w}>
                  <Icon name={q.i} size={21} />
                  {q.c && <Caret $ml={4} $c={q.c} />}
                </QuickBtn>
              ))}
              <QuickBtn $w={20}><Caret $ml={0} $c="#666" /></QuickBtn>
            </QuickBar>
            <Title>广联达BIM土建计量平台 GTJ2021 - [猎德幼儿园]</Title>
            <WinCtrls>
              <svg width="14" height="14" viewBox="0 0 14 14"><path d="M3 8h8" stroke="#666" strokeWidth="2" /></svg>
              <svg width="14" height="14" viewBox="0 0 14 14" fill="none" stroke="#666" strokeWidth="1.2"><path d="M2 5h8v8H2zM5 5V2h8v8h-3" /></svg>
              <svg width="14" height="14" viewBox="0 0 14 14" fill="none" stroke="#666" strokeWidth="1.3"><path d="M2 2l10 10M12 2L2 12" /></svg>
            </WinCtrls>
          </TitleRow>
          <TabRow>
            {tabs.map((t) => (
              <Tab key={t} $on={t === "建模"}>{t}</Tab>
            ))}
            <AskBox>土建计量GTJ中，图纸管理中都有哪些功能？</AskBox>
            <HeadTools>
              <svg width="18" height="18" viewBox="0 0 18 18" fill="none" stroke="#666" strokeWidth="1.2"><path d="M6 2L1 6l2 3 2-1v8h8V8l2 1 2-3-5-4c-1 2-5 2-6 0z" /></svg>
              <svg width="16" height="16" viewBox="0 0 16 16" fill="none" stroke="#555" strokeWidth="1.3"><path d="M1 11l7-7 7 7" /></svg>
            </HeadTools>
          </TabRow>
        </HeadRight>
      </Header>

      <Ribbon>
        <Group $w={290}>
          <GroupBody $pad={10}>
            <SelectBtn>
              <svg width="36" height="38" viewBox="0 0 36 38" fill="#cfe2f9" stroke="#2f80ed" strokeWidth="2.2" strokeLinejoin="round"><path d="M11 3l20 24-13 0-7 9z" /></svg>
              <BigLabel $mt={3}>选择</BigLabel>
            </SelectBtn>
            <Column ml={5} w={123} tools={[["pick", "拾取构件"], ["batch", "批量选择"], ["propsel", "按属性选择", "c"]]} />
            <Column w={90} tools={[["find", "查找图元"], ["filter", "过滤图元", "off"]]} />
          </GroupBody>
          <GroupLabel>选择</GroupLabel>
        </Group>
        <Group $w={243}>
          <GroupBody $pad={11}>
            <Column w={99} tools={[["scale", "设置比例"], ["replace", "查找替换"], ["restore", "还原CAD"]]} />
            <Column w={120} tools={[["floors", "识别楼层表"], ["cadopt", "CAD识别选项"]]} />
          </GroupBody>
          <GroupLabel $drop>图纸操作<Caret /></GroupLabel>
        </Group>
        <Group $w={346}>
          <GroupBody $pad={10}>
            <Column w={84} tools={[["define", "定义"], ["cloud", "云检查"], ["lock", "锁定", "c"]]} />
            <Column w={139} tools={[["copylayer", "复制到其它层", "c"], ["autoalign", "自动平齐顶板", "offc"], ["store", "图元存盘", "c"]]} />
            <Column w={110} tools={[["twoaxis", "两点辅轴", "c"], ["dimlen", "长度标注", "c"], ["convert", "转换图元"]]} />
          </GroupBody>
          <GroupLabel $drop>通用操作<Caret /></GroupLabel>
        </Group>
        <Group $w={296}>
          <GroupBody $pad={9}>
            <Column w={67} tools={[["del", "删除"], ["copy", "复制"], ["move", "移动"]]} />
            <Column w={69} tools={[["rotate", "旋转"], ["mirror", "镜像"], ["extend", "延伸", "off"]]} />
            <Column w={78} tools={[["trim", "修剪", "off"], ["align", "对齐", "c"], ["brk", "打断", "off"]]} />
            <Column w={60} tools={[["offset", "偏移"], ["merge", "合并"], ["split", "分割"]]} />
          </GroupBody>
          <GroupLabel $drop>修改<Caret /></GroupLabel>
        </Group>
        <Group $w={83}>
          <GroupBody $pad={9}>
            <Col $w={40}>
              <ToolRow><Icon name="point" /></ToolRow>
              <ToolRow><Icon name="line" /></ToolRow>
              <ToolRow><Icon name="arc" /><Caret $ml={3} $c="#ccc" /></ToolRow>
            </Col>
            <Col $w={30}>
              <ToolRow><Icon name="gauge" /></ToolRow>
              <ToolRow><Icon name="square" /></ToolRow>
            </Col>
          </GroupBody>
          <GroupLabel>绘图</GroupLabel>
        </Group>
        <Group $w={230}>
          <GroupBody $pad={12}>
            <BigBtn $w={75}>
              <Icon name="bigfind" size={46} />
              <BigLabel $mt={1}>识别桩承台</BigLabel>
            </BigBtn>
            <Column ml={11} w={125} tools={[["check", "校核承台图元"]]} />
          </GroupBody>
          <GroupLabel>识别桩承台</GroupLabel>
        </Group>
        <Group $w={97}>
          <GroupBody $pad={0}>
            <BigBtn $w={78}>
              <Icon name="smart" size={46} />
              <BigLabel $mt={1}>智能布置</BigLabel>
              <Caret $ml={0} />
            </BigBtn>
          </GroupBody>
          <GroupLabel>智能布置</GroupLabel>
        </Group>
        <Group $w={325}>
          <GroupBody $pad={10}>
            <Column w={128} tools={[["adjust", "调整钢筋方向"], ["slope", "设置承台放坡"], ["noslope", "取消承台放坡"]]} />
            <Column w={145} tools={[["apply", "应用同名承台"], ["earth", "生成土方"], ["editbar", "编辑承台加强筋"]]} />
            <Col $w={40}>
              <ToolRow><Icon name="smartq" /><Caret $ml={5} /></ToolRow>
            </Col>
          </GroupBody>
          <GroupLabel>桩承台二次编辑</GroupLabel>
        </Group>
      </Ribbon>

      <SelectorBar>
        {["首层", "基础", "桩承台", "ZCT-1"].map((s) => (
          <Selector key={s}>{s}<Caret $ml={0} $c="#555" /></Selector>
        ))}
      </SelectorBar>

      <Main>
        <Nav>
          <Band><BandClose>×</BandClose></Band>
          <NavTitle>导航栏</NavTitle>
          <NavTools>
            <Icon name="sparkle" size={17} />
            <NavToggle $ml={12}><Icon name="listA" size={22} /></NavToggle>
            <NavToggle $ml={6}><Icon name="listB" size={21} /></NavToggle>
          </NavTools>
          <NavList>
            {navGroups.map((g) => <NavGroup key={g}>{g}</NavGroup>)}
            {navItems.map(([icon, label]) => (
              <NavItem key={label} $on={label.startsWith("桩承台")}>
                <Icon name={icon} size={25} />
                {label}
              </NavItem>
            ))}
            <NavGroup>其它</NavGroup>
            <NavGroup />
          </NavList>
          <NavScroll />
        </Nav>

        <ListCol>
          <Panel $h={335}>
            <Band />
            <TabStrip>
              <PTab $on>构件列表</PTab>
              <PTab>图纸管理</PTab>
            </TabStrip>
            <PanelBar>
              <BarItem><Icon name="newfile" size={20} />新建<Caret $ml={4} /></BarItem>
              <BarItem><Icon name="copy" size={20} />复制</BarItem>
              <BarItem><Icon name="del" size={20} /></BarItem>
            </PanelBar>
            <SearchLine>搜索构件...</SearchLine>
            <TreeRow><Caret $ml={0} />桩承台</TreeRow>
            <TreePill>ZCT-1  &lt;0&gt;</TreePill>
          </Panel>
          <Panel>
            <Band />
            <TabStrip>
              <PTab $on>属性列表</PTab>
              <PTab>图层管理</PTab>
            </TabStrip>
            <Table>
              <TRow $h={27}>
                <TIndex />
                <TName $head>属性名称</TName>
                <TValue>属性值</TValue>
              </TRow>
              {tableRows.map(([idx, name, value, blue, plus]) => (
                <TRow key={idx}>
                  <TIndex>{idx}</TIndex>
                  <TName $blue={blue}>
                    {plus && <PlusBox>+</PlusBox>}
                    {name}
                  </TName>
                  <TValue>{value}</TValue>
                </TRow>
              ))}
              <TRow $fill>
                <TIndex $fill />
              </TRow>
            </Table>
          </Panel>
        </ListCol>

        <CanvasBox>
          <CanvasArt />
          <Palette>
            <PaletteSlot $mb={13}><Icon name="sphere" size={25} /></PaletteSlot>
            <PaletteSlot $mb={8}>
              <svg width="25" height="25" viewBox="0 0 20 20" fill="none" strokeWidth="1.1">
                <path d="M2 6l3-4h13v12l-3 4H2zM2 6h13v12M15 6l3-4" stroke="#5e646d" />
                <text x="2.8" y="16" fontSize="6.5" fontWeight="700" fill="#2f80ed" fontFamily="Noto Sans">3D</text>
              </svg>
            </PaletteSlot>
            <PaletteSlot><Icon name="cubetop" size={25} /></PaletteSlot>
            <PaletteCaret><Caret $ml={0} $c="#555" /></PaletteCaret>
            <PaletteSlot><Icon name="cubefill" size={25} /></PaletteSlot>
            <PaletteCaret $h={27}><Caret $ml={0} $c="#555" /></PaletteCaret>
            <PaletteSlot $mb={11}><Icon name="corners" size={25} /></PaletteSlot>
            <PaletteSlot><Icon name="dashcube" size={25} /></PaletteSlot>
            <PaletteRule />
            <PaletteSlot><Icon name="listeye" size={25} /></PaletteSlot>
          </Palette>
          <EdgeBar />
        </CanvasBox>
      </Main>

      <StatusBar>
        <StatText $w={112}>层高：  3.6</StatText>
        <StatText $w={175}>标高：  0~3.6</StatText>
        <StatText $w={138}>选中图元：0</StatText>
        <StatText $w={138}>隐藏图元：0</StatText>
        <StatBtn $w={29}><Icon name="s1" size={18} /></StatBtn>
        <StatBtn $w={44} $ml={5} $on><Icon name="s2" size={20} /><Caret $ml={0} $c="#555" /></StatBtn>
        <StatBtn $w={29} $ml={9}><Icon name="s3" size={20} /></StatBtn>
        <StatBtn $w={43} $ml={10}><Icon name="s4" size={20} /><Caret $ml={0} $c="#555" /></StatBtn>
        <StatBtn $w={44} $ml={5}><Icon name="s5" size={20} /><Caret $ml={0} $c="#555" /></StatBtn>
        <StatBtn $w={30} $ml={5}><Icon name="s6" size={20} /></StatBtn>
        <StatBtn $w={31} $ml={4}><Icon name="s7" size={20} /></StatBtn>
        <Hint><Icon name="expand" size={20} />按鼠标左键指定第一个角点，或拾取构件图元</Hint>
      </StatusBar>

      <Taskbar>
        <Weather>
          <svg width="31" height="32" viewBox="0 0 31 32">
            <circle cx="16" cy="18" r="11" fill="#f0921c" />
            <path d="M2 14a4 4 0 0 1 3-7 5 5 0 0 1 9 1 3 3 0 0 1 0 6z" fill="#a8c6ee" />
            <path d="M14 27a4 4 0 0 1 2-7 5 5 0 0 1 9 0 4 4 0 0 1 1 7z" fill="#b4d0f2" />
          </svg>
          <WeatherBadge>1</WeatherBadge>
          <WeatherText>32°C<br />局部晴朗</WeatherText>
        </Weather>
        <svg width="29" height="29" viewBox="0 0 29 29">
          <path d="M0 2l14-2v14H0z" fill="#3fc4f8" />
          <path d="M15 0l14 0v14H15z" fill="#55d4fb" />
          <path d="M0 15h14v14H1z" fill="#19a0ef" />
          <path d="M15 15h14v14H15z" fill="#1aa8f2" />
        </svg>
        <SearchPill>
          <svg width="24" height="24" viewBox="0 0 24 24" fill="none" stroke="#e8e8e8" strokeWidth="2"><circle cx="11" cy="10" r="7" /><path d="M16 16l5 6" /></svg>
          搜索
          <Doodle width="52" height="32" viewBox="0 0 52 32">
            <path d="M28 2l10 1 3 8-9 8-3 11H16l3-14z" fill="#d6a27c" />
            <path d="M3 9l38-2v3L3 12z" fill="#f4b13a" />
            <path d="M0 9h6v3H0z" fill="#e46a6a" />
            <path d="M44 14c4 0 3 5 1 6s1 4 2 6" stroke="#aaa" fill="none" />
          </Doodle>
        </SearchPill>
        <TaskBtn $ml={5.5}>
          <svg width="31" height="30" viewBox="0 0 31 30">
            <rect x="0" y="9" width="21" height="20" rx="2" fill="#777" />
            <rect x="8" y="1" width="22" height="21" rx="2" fill="#e8e8e8" />
          </svg>
        </TaskBtn>
        <TaskBtn>
          <svg width="31" height="31" viewBox="0 0 31 31">
            <circle cx="15.5" cy="15.5" r="15" fill="#1d9dd8" />
            <path d="M31 17c0-9-7-16-15-16S3 6 2 11c3-4 8-6 14-4 6 1 8 6 6 9-1 2-5 2-7 1l-2 1c2 5 12 7 18-1z" fill="#45c96f" />
            <circle cx="9" cy="21" r="7" fill="#d2d8b5" />
            <path d="M22 27c4-2 7-6 9-10-1 7-6 12-12 13z" fill="#0b5ea8" />
          </svg>
        </TaskBtn>
        <TaskBtn>
          <svg width="31" height="29" viewBox="0 0 31 29">
            <path d="M0 2h11l3 4h17v4H0z" fill="#c98a00" />
            <rect x="0" y="8" width="31" height="21" rx="1" fill="#ffd23e" />
            <rect x="10" y="18" width="11" height="6" rx="1" fill="#1c7ed6" />
          </svg>
        </TaskBtn>
        <TaskBtn $on>
          <svg width="30" height="31" viewBox="0 0 30 31">
            <rect width="30" height="31" rx="4" fill="#e8f5fd" />
            <path d="M6 5h18c3 0 3 5 0 5h-5l-1 15c0 3-6 3-6 0L11 10H6c-3 0-3-5 0-5z" fill="#18a2ee" />
          </svg>
          <TaskMark $on />
        </TaskBtn>
        <TaskBtn>
          <svg width="30" height="31" viewBox="0 0 30 31">
            <rect width="30" height="31" rx="2" fill="#8a8f96" />
            <rect x="3" y="3" width="24" height="25" fill="#0f5fa8" />
            <text x="15" y="20" fill="#b7d8f5" fontSize="10" textAnchor="middle" fontFamily="Liberation Sans">CAD</text>
          </svg>
          <TaskMark />
        </TaskBtn>
        <TaskBtn>
          <svg width="30" height="31" viewBox="0 0 30 31" fill="none">
            <rect width="30" height="31" rx="6" fill="#f2294f" />
            <path d="M18 6c-8 1-12 6-11 11 1 6 9 8 13 4s2-9-2-10-6 3-4 6" stroke="#fff" strokeWidth="2.4" />
          </svg>
          <TaskMark />
        </TaskBtn>
        <Tray>
          <TrayItem $ml={0}><svg width="14" height="10" viewBox="0 0 14 10" fill="none" stroke="#eee" strokeWidth="1.8"><path d="M1 9l6-7 6 7" /></svg></TrayItem>
          <TrayItem $ml={21}><svg width="20" height="16" viewBox="0 0 20 16"><path d="M3 15a4 4 0 0 1 0-8 5 5 0 0 1 9-3 4 4 0 0 1 4 4 3.5 3.5 0 0 1 1 7z" fill="#ddd" /><path d="M3 7a5 5 0 0 1 9-3L7 9z" fill="#888" /></svg></TrayItem>
          <TrayItem $ml={19}><svg width="16" height="24" viewBox="0 0 16 24" fill="none" stroke="#eee" strokeWidth="1.4"><path d="M1 23L8 2l7 21M4 15h8" /></svg></TrayItem>
          <TrayItem $ml={28}><svg width="20" height="28" viewBox="0 0 20 28"><path d="M3 4l15-3 1 22-15 4z" fill="#e8541c" /><path d="M14 6H7v7h7v6H6" fill="none" stroke="#fff" strokeWidth="2.5" /></svg></TrayItem>
          <TrayItem $ml={27}><svg width="20" height="20" viewBox="0 0 20 20" fill="none" stroke="#eee" strokeWidth="1.5"><path d="M1 7a13 13 0 0 1 18 0M4 10.5a9 9 0 0 1 12 0M7 13.5a4.500 4.500 0 0 1 6 0" /><circle cx="10" cy="17" r="1.2" fill="#eee" /></svg></TrayItem>
          <TrayItem $ml={7}><svg width="20" height="22" viewBox="0 0 20 22" fill="none" stroke="#ddd" strokeWidth="1.2"><path d="M1 8h3l5-5v16l-5-5H1zM12 7a5 5 0 0 1 0 8M15 4a9 9 0 0 1 0 14" /></svg></TrayItem>
          <TrayItem $ml={13}><svg width="20" height="24" viewBox="0 0 20 24" fill="none" stroke="#eee" strokeWidth="1.5"><path d="M1 7h15a2 2 0 0 1 2 2v10H1zM3 6V2" /><rect x="5" y="10" width="10" height="7" fill="#eee" /></svg></TrayItem>
          <Clock>9:55<br />2024/8/13</Clock>
          <Bell>
            <svg width="16" height="24" viewBox="0 0 16 24"><path d="M8 1c4 0 5 4 5 9l2 8H1l2-8c0-5 1-9 5-9z" fill="#d9a9ea" /><rect x="5" y="19" width="6" height="3" rx="1.5" fill="#d9a9ea" /></svg>
          </Bell>
        </Tray>
      </Taskbar>

      <Upload>
        <UploadIcon>
          <svg width="26" height="22" viewBox="0 0 26 22" fill="none" stroke="#fff" strokeWidth="3.2">
            <circle cx="13" cy="7" r="4.5" />
            <circle cx="7" cy="15" r="4.5" />
            <circle cx="19" cy="15" r="4.5" />
          </svg>
        </UploadIcon>
        <UploadText>拖拽至此上传</UploadText>
      </Upload>

      <Dialog>
        <DlgHead>
          <DlgTitle>选择参数化图形</DlgTitle>
          <DlgCtrls>
            <svg width="13" height="13" viewBox="0 0 13 13" fill="none" stroke="#666" strokeWidth="1.3"><rect x="1" y="1" width="11" height="11" /></svg>
            <svg width="14" height="14" viewBox="0 0 14 14" fill="none" stroke="#666" strokeWidth="1.2"><path d="M1 1l12 12M13 1L1 13" /></svg>
          </DlgCtrls>
        </DlgHead>
        <DlgOptions>
          <OptLabel>参数化截面类型:</OptLabel>
          <OptUnit>单位:</OptUnit>
          <OptMM>mm</OptMM>
          <Radio><RadioDot /></Radio>
          <RadioLabel $w={98}>角度放坡形式</RadioLabel>
          <Radio />
          <RadioLabel $w={100}>底宽放坡形式</RadioLabel>
          <BlueBtn>配筋形式</BlueBtn>
        </DlgOptions>
        <DlgBody>
          <GridBox>
            <ShapeGrid>
              {shapes.map((s, i) => (
                <Cell key={i} $on={i === 0}>
                  <ShapeBox>
                    <ShapeSvg width="175" height="175" viewBox="0 0 175 175">{s}</ShapeSvg>
                  </ShapeBox>
                </Cell>
              ))}
            </ShapeGrid>
            <GridScroll />
          </GridBox>
          <Preview viewBox="0 0 580 578"><Drawing /></Preview>
        </DlgBody>
        <DlgFoot>
          <FootBlue>确定</FootBlue>
          <GhostBtn>取消</GhostBtn>
        </DlgFoot>
        <Grip width="13" height="13" viewBox="0 0 13 13" fill="#777">
          <rect x="9" y="1" width="2.5" height="2.5" />
          <rect x="5" y="5" width="2.5" height="2.5" />
          <rect x="9" y="5" width="2.5" height="2.5" />
          <rect x="1" y="9" width="2.5" height="2.5" />
          <rect x="5" y="9" width="2.5" height="2.5" />
          <rect x="9" y="9" width="2.5" height="2.5" />
        </Grip>
      </Dialog>
    </Page>
  );
}
